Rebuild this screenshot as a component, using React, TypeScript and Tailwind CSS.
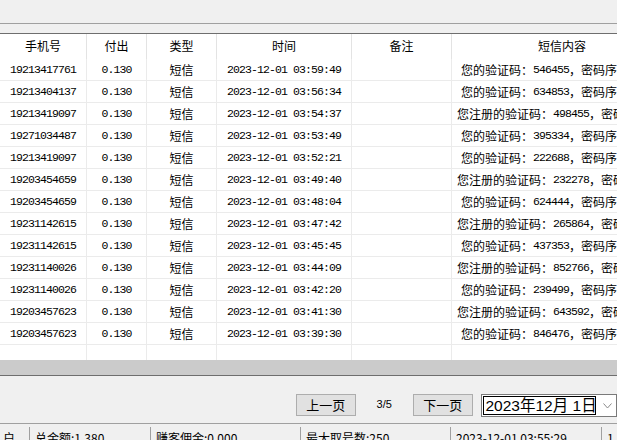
import React from "react";

const CJK = '"Noto Sans CJK SC", "Microsoft YaHei", sans-serif';
const MONO = '"Liberation Mono", "DejaVu Sans Mono", monospace';

type Row = { phone: string; time: string; reg: boolean; code: string };

const rows: Row[] = [
  { phone: "19213417761", time: "03:59:49", reg: false, code: "546455" },
  { phone: "19213404137", time: "03:56:34", reg: false, code: "634853" },
  { phone: "19213419097", time: "03:54:37", reg: true, code: "498455" },
  { phone: "19271034487", time: "03:53:49", reg: false, code: "395334" },
  { phone: "19213419097", time: "03:52:21", reg: false, code: "222688" },
  { phone: "19203454659", time: "03:49:40", reg: true, code: "232278" },
  { phone: "19203454659", time: "03:48:04", reg: false, code: "624444" },
  { phone: "19231142615", time: "03:47:42", reg: true, code: "265864" },
  { phone: "19231142615", time: "03:45:45", reg: false, code: "437353" },
  { phone: "19231140026", time: "03:44:09", reg: true, code: "852766" },
  { phone: "19231140026", time: "03:42:20", reg: false, code: "239499" },
  { phone: "19203457623", time: "03:41:30", reg: true, code: "643592" },
  { phone: "19203457623", time: "03:39:30", reg: false, code: "846476" },
];

const cols = "grid grid-cols-[87px_60px_70px_135px_100px_260px]";

function Mono({ children }: { children: React.ReactNode }) {
  return (
    <span className="text-[11.5px] tracking-[-0.9px] text-black" style={{ fontFamily: MONO }}>
      {children}
    </span>
  );
}

function Cjk({ children }: { children: React.ReactNode }) {
  return (
    <span className="text-[12px] text-black" style={{ fontFamily: CJK }}>
      {children}
    </span>
  );
}

export default function App() {
  return (
    <div className="w-[617px] h-[440px] overflow-hidden bg-[#f0f0f0] flex flex-col">
      <div className="h-[23px] shrink-0 bg-[#f0f0f0]" />
      <div className="h-px shrink-0 bg-[#a0a0a0]" />
      <div className="h-[9px] shrink-0 bg-[#f0f0f0]" />
      <div className="h-px shrink-0 bg-[#6e6e6e]" />

      {/* grid */}
      <div className="h-[326px] shrink-0 bg-white flex flex-col overflow-hidden">
        <div className={`${cols} h-[25px] shrink-0`}>
          {["手机号", "付出", "类型", "时间", "备注"].map((h) => (
            <div
              key={h}
              className="flex items-center justify-center border-r border-[#e3e3e3] pb-[2px]"
            >
              <Cjk>{h}</Cjk>
            </div>
          ))}
          <div className="flex items-center justify-center pb-[2px] pr-[40px]">
            <Cjk>短信内容</Cjk>
          </div>
        </div>
        {rows.map((r, i) => (
          <div key={i} className={`${cols} h-[22px] shrink-0 border-b border-[#ebebeb]`}>
            <div className="flex items-center justify-center border-r border-[#ebebeb] pt-px">
              <Mono>{r.phone}</Mono>
            </div>
            <div className="flex items-center justify-center border-r border-[#ebebeb] pt-px">
              <Mono>0.130</Mono>
            </div>
            <div className="flex items-center justify-center border-r border-[#ebebeb] pt-px">
              <Cjk>短信</Cjk>
            </div>
            <div className="flex items-center justify-center border-r border-[#ebebeb] pt-px">
              <Mono>2023-12-01 {r.time}</Mono>
            </div>
            <div className="border-r border-[#ebebeb]" />
            <div
              className={`flex items-center whitespace-nowrap pt-px ${r.reg ? "pl-[5px]" : "pl-[9px]"}`}
            >
              <Cjk>{r.reg ? "您注册的验证码：" : "您的验证码："}</Cjk>
              <Mono>{r.code}</Mono>
              <Cjk>，密码序号为</Cjk>
            </div>
          </div>
        ))}
        <div className={`${cols} flex-1`}>
          <div className="border-r border-[#ebebeb]" />
          <div className="border-r border-[#ebebeb]" />
          <div className="border-r border-[#ebebeb]" />
          <div className="border-r border-[#ebebeb]" />
          <div className="border-r border-[#ebebeb]" />
          <div />
        </div>
      </div>

      <div className="h-[15px] shrink-0 bg-[#cbcbcb]" />
      <div className="h-px shrink-0 bg-[#6e6e6e]" />

      {/* pager */}
      <div className="h-[47px] shrink-0 bg-[#f0f0f0] flex items-start pt-[18px] pl-[296px]">
        <button
          className="w-[61px] h-[22px] border border-[#adadad] bg-[#e1e1e1] flex items-center justify-center text-[13px] text-black"
          style={{ fontFamily: CJK }}
        >
          上一页
        </button>
        <div
          className="w-[59px] h-[22px] flex items-center justify-center text-[11px] text-black pb-[2px]"
          style={{ fontFamily: '"Liberation Sans", Arial, sans-serif' }}
        >
          3/5
        </div>
        <button
          className="w-[61px] h-[22px] border border-[#adadad] bg-[#e1e1e1] flex items-center justify-center text-[13px] text-black"
          style={{ fontFamily: CJK }}
        >
          下一页
        </button>
        <div className="ml-[8px] w-[140px] h-[23px] border border-[#7a7a7a] bg-white flex items-center pl-px">
          <div
            className="h-[19px] w-[113px] border border-black flex items-center pl-[2px] text-[15.5px] leading-none text-black whitespace-nowrap overflow-hidden"
            style={{ fontFamily: '"Liberation Sans", "Noto Sans CJK SC", sans-serif' }}
          >
            2023年12月&nbsp;1日
          </div>
          <svg className="ml-[7px]" width="9" height="6" viewBox="0 0 9 6">
            <polyline points="0.5,0.5 4.5,5 8.5,0.5" fill="none" stroke="#8a8a8a" strokeWidth="1" />
          </svg>
        </div>
      </div>

      <div className="h-px shrink-0 bg-[#a0a0a0]" />
      <div className="h-[3px] shrink-0 bg-[#f0f0f0]" />

      {/* status bar */}
      <div
        className="flex-1 grid grid-cols-[30px_121px_150px_150px_151px_40px] text-[12px] text-black leading-none"
        style={{ fontFamily: CJK }}
      >
        {["户", "总金额:1.380", "赚客佣金:0.000", "最大取号数:250", "2023-12-01 03:55:29", "1"].map(
          (t, i) => (
            <div
              key={i}
              className={`pt-[5px] whitespace-nowrap overflow-hidden ${i === 0 ? "pl-[3px]" : "pl-[5px]"} ${
                i < 5 ? "border-r border-[#a0a0a0]" : ""
              }`}
            >
              {t}
            </div>
          )
        )}
      </div>
    </div>
  );
}
